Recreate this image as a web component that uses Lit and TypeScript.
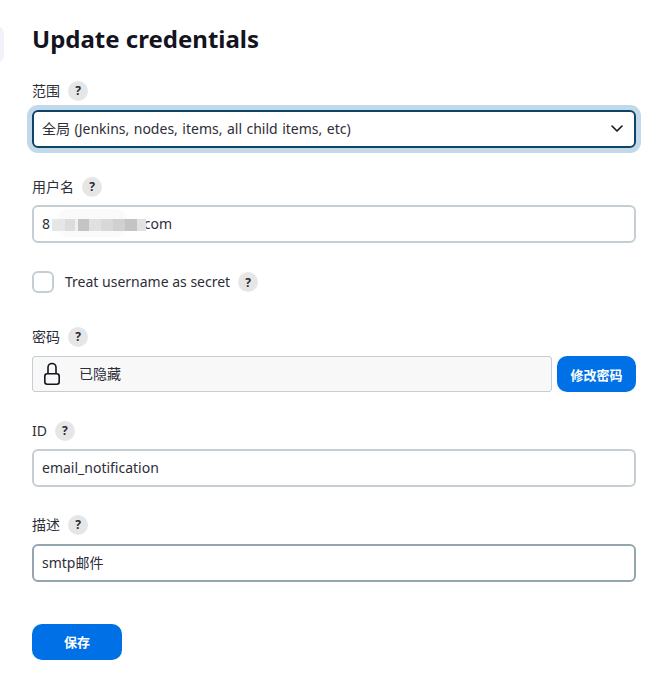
import { LitElement, html, css } from "lit";
import { customElement } from "lit/decorators.js";

const MOSAIC: [string, number][] = [
  ["#e6e6e6", 13], ["#dcdcdc", 10], ["#f0f0f0", 3], ["#c4c4c4", 11], ["#e0e0e0", 12],
  ["#d8d8d8", 12], ["#d0d0d0", 12], ["#c4c4c4", 12], ["#e2e2e2", 9],
];

@customElement("app-root")
export class AppRoot extends LitElement {
  static styles = css`
    :host {
      display: block;
      width: 656px;
      height: 693px;
      background: #fff;
      position: relative;
      overflow: hidden;
      color: #14141f;
      font-family: "Noto Sans", "Noto Sans CJK SC", sans-serif;
      font-size: 14px;
    }
    .sliver {
      position: absolute; left: -20px; top: 27px; width: 24px; height: 35px;
      border-radius: 6px; background: #f1f1f9;
    }
    .page { display: flex; flex-direction: column; padding: 0 20px 0 32px; }
    h1 {
      margin: 0; height: 81px; line-height: 78px;
      font-size: 24px; font-weight: 700; color: #14141f;
    }
    .label-row {
      display: flex; align-items: center; gap: 8px; height: 20px;
      font-size: 14px; line-height: 20px; color: #2e2e38;
    }
    .help {
      width: 20px; height: 20px; border-radius: 50%; background: #e6e6e6;
      display: flex; align-items: center; justify-content: center;
      font-size: 12px; font-weight: 700; color: #2a2a35; flex: none;
    }
    .select {
      margin-top: 9px; height: 38px; box-sizing: border-box;
      border: 2px solid #0b4468; border-radius: 6px;
      box-shadow: 0 0 0 5px #c1d9e8;
      display: flex; align-items: center; justify-content: space-between;
      padding: 0 11px 2px 8px; color: #2e2e38; word-spacing: 0.85px;
    }
    .input {
      height: 38px; box-sizing: border-box; position: relative;
      border: 2px solid #c5cfd3; border-radius: 6px;
      display: flex; align-items: center; padding: 0 8px 2px; color: #2e2e38;
    }
    .input.hover { border-color: #94a5ad; }
    .f-user { margin-top: 29px; }
    .f-user .input { margin-top: 8px; }
    .spacer { width: 90px; flex: none; }
    .smear {
      position: absolute; left: 24px; top: 2px; width: 68px; height: 28px;
      border-radius: 10px; background: #fafafa;
    }
    .username-text { position: relative; display: flex; }
    .mosaic { position: absolute; left: 18px; top: 12px; display: flex; height: 12px; }
    .mosaic i { display: block; }
    .check-row {
      margin-top: 28px; height: 22px; display: flex; align-items: center;
      color: #2e2e38; padding-bottom: 1px; box-sizing: content-box; margin-bottom: -1px;
    }
    .box {
      width: 22px; height: 22px; box-sizing: border-box;
      border: 2px solid #c5cfd3; border-radius: 6px; margin-right: 11px; flex: none;
    }
    .label-text { position: relative; top: -1px; }
    .check-row .help { margin-left: 8px; }
    .f-pass { margin-top: 34px; }
    .pass-row { margin-top: 9px; display: flex; gap: 5px; height: 36px; }
    .hidden-box {
      flex: 1; box-sizing: border-box; border: 1px solid #c5cfd3; border-radius: 3px;
      background: #f8f8f8; display: flex; align-items: center; padding-left: 10px;
      gap: 16px; font-size: 14px; color: #2e2e38;
    }
    .hidden-text { padding-bottom: 2px; }
    .btn {
      background: #0070e6; color: #fff; font-weight: 700; font-size: 13px;
      border-radius: 10px; display: flex; align-items: center; justify-content: center;
      height: 36px; flex: none;
    }
    .btn.change { width: 79px; }
    .btn.save { width: 90px; margin-top: 42px; padding-bottom: 2px; box-sizing: border-box; }
    .f-id { margin-top: 29px; }
    .f-id .input { margin-top: 8px; }
    .f-desc { margin-top: 28px; }
    .f-desc .input { margin-top: 9px; }
    svg { display: block; }
  `;

  private label(t: string) {
    return html`<div class="label-row"><span>${t}</span><span class="help">?</span></div>`;
  }

  render() {
    return html`
      <div class="sliver"></div>
      <div class="page">
        <h1>Update credentials</h1>
        ${this.label("范围")}
        <div class="select">
          <span>全局 (Jenkins, nodes, items, all child items, etc)</span>
          <svg width="12" height="7" viewBox="0 0 12 7" fill="none" stroke="#14141f" stroke-width="1.6" stroke-linecap="round" stroke-linejoin="round"><path d="M1 1l5 5 5-5"/></svg>
        </div>
        <div class="f-user">
          ${this.label("用户名")}
          <div class="input">
            <span class="smear"></span>
            <span class="username-text"><span>8</span><span class="spacer"></span><span>.com</span></span>
            <span class="mosaic">${MOSAIC.map(([c, w]) => html`<i style="background:${c};width:${w}px"></i>`)}</span>
          </div>
        </div>
        <div class="check-row">
          <span class="box"></span><span class="label-text">Treat username as secret</span><span class="help">?</span>
        </div>
        <div class="f-pass">
          ${this.label("密码")}
          <div class="pass-row">
            <div class="hidden-box">
              <svg width="20" height="24" viewBox="0 0 20 24" fill="none" stroke="#14141f" stroke-width="1.6" stroke-linejoin="round"><rect x="1.800" y="11.800" width="14.400" height="10.400" rx="2.500"/><path d="M5 11.800V5.500a4 4 0 0 1 8 0v6.300"/></svg>
              <span class="hidden-text">已隐藏</span>
            </div>
            <div class="btn change">修改密码</div>
          </div>
        </div>
        <div class="f-id">
          ${this.label("ID")}
          <div class="input">email_notification</div>
        </div>
        <div class="f-desc">
          ${this.label("描述")}
          <div class="input hover">smtp邮件</div>
        </div>
        <div class="btn save">保存</div>
      </div>
    `;
  }
}
